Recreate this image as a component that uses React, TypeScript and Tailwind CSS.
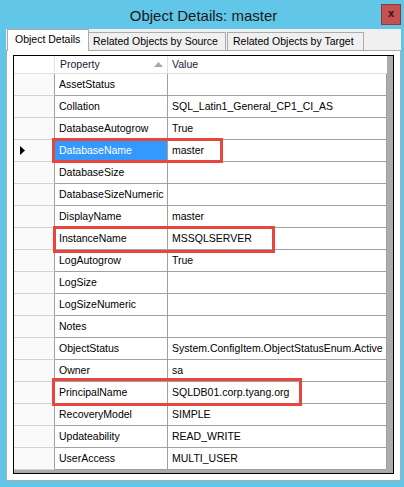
const rows: [string, string][] = [
  ["AssetStatus", ""],
  ["Collation", "SQL_Latin1_General_CP1_CI_AS"],
  ["DatabaseAutogrow", "True"],
  ["DatabaseName", "master"],
  ["DatabaseSize", ""],
  ["DatabaseSizeNumeric", ""],
  ["DisplayName", "master"],
  ["InstanceName", "MSSQLSERVER"],
  ["LogAutogrow", "True"],
  ["LogSize", ""],
  ["LogSizeNumeric", ""],
  ["Notes", ""],
  ["ObjectStatus", "System.ConfigItem.ObjectStatusEnum.Active"],
  ["Owner", "sa"],
  ["PrincipalName", "SQLDB01.corp.tyang.org"],
  ["RecoveryModel", "SIMPLE"],
  ["Updateability", "READ_WRITE"],
  ["UserAccess", "MULTI_USER"],
];

const selected = 3;

function App() {
  return (
    <div
      className="w-[404px] h-[487px] bg-[#62c6e9] flex flex-col pl-[6px] pr-[3px] pb-[6px] text-black"
      style={{ fontFamily: '"Liberation Sans", Arial, sans-serif' }}
    >
      {/* title bar */}
      <div className="h-[29px] flex shrink-0">
        <div className="flex-1" />
        <div className="text-[15px] text-[#1a1a1a] leading-[29px] pt-[1px]">Object Details: master</div>
        <div className="flex-1 flex justify-end items-start">
          <button className="mt-[4px] w-[20px] h-[21px] bg-[#c75050] border border-[#8f3a3a] flex items-center justify-center text-[11px] font-bold text-[#1a1a1a] leading-none pb-[2px]">
            x
          </button>
        </div>
      </div>

      <div className="flex-1 bg-[#f0f0f0] flex flex-col min-h-0">
        {/* tabs */}
        <div className="h-[21px] flex items-end shrink-0 text-[10.5px]">
          <div className="relative z-10 ml-[1px] -mb-px w-[82px] h-[22px] bg-white border border-b-0 border-[#acacac] flex items-center pl-[7px] pb-[1px]">
            Object Details
          </div>
          <div className="w-[137px] h-[18px] bg-[#f0f0f0] border border-b-0 border-l-0 border-[#acacac] flex items-center pl-[4px] whitespace-nowrap overflow-hidden">
            Related Objects by Source
          </div>
          <div className="ml-px w-[137px] h-[18px] bg-[#f0f0f0] border border-b-0 border-[#acacac] flex items-center pl-[5px] whitespace-nowrap overflow-hidden">
            Related Objects by Target
          </div>
        </div>

        {/* panel */}
        <div className="flex-1 bg-white border border-[#acacac] pt-[4px] px-[6px] pb-[6px] min-h-0">
          <div className="relative h-full border border-black bg-[#ababab] text-[10.5px]">
            <div className="w-[373px] bg-white">
              {/* header */}
              <div className="flex h-[18px] border-b border-[#e0e0e0] text-[#1a1a3a]">
                <div className="w-[41px] border-r border-[#e0e0e0]" />
                <div className="w-[113px] border-r border-[#e0e0e0] flex items-center justify-between pl-[5px] pr-[4px]">
                  <span>Property</span>
                  <svg width="9" height="5" viewBox="0 0 9 5">
                    <polygon points="4.5,0 9,5 0,5" fill="#a8a8a8" />
                  </svg>
                </div>
                <div className="w-[219px] flex items-center pl-[4px]">Value</div>
              </div>

              {rows.map(([k, v], i) => (
                <div key={k} className="flex h-[22px]">
                  <div className="w-[41px] border-r border-b border-r-[#a0a0a0] border-b-[#d4d4d4] bg-[#fafafa] flex items-center pl-[6px]">
                    {i === selected && (
                      <svg width="5" height="9" viewBox="0 0 5 9">
                        <polygon points="0,0 5,4.5 0,9" fill="#000" />
                      </svg>
                    )}
                  </div>
                  <div
                    className={
                      i === selected
                        ? "w-[113px] border-r border-b border-[#a0a0a0] bg-[#3399ff] text-white flex items-center pl-[4px] whitespace-nowrap overflow-hidden"
                        : "w-[113px] border-r border-b border-[#a0a0a0] flex items-center pl-[4px] whitespace-nowrap overflow-hidden"
                    }
                  >
                    {k}
                  </div>
                  <div className="w-[219px] border-r border-b border-[#a0a0a0] flex items-center pl-[4px] whitespace-nowrap overflow-hidden">
                    {v}
                  </div>
                </div>
              ))}
            </div>

            {/* highlight boxes */}
            <div className="absolute left-[38px] top-[82px] w-[171px] h-[25px] border-[3px] border-[#e8453c]" />
            <div className="absolute left-[39px] top-[170px] w-[222px] h-[27px] border-[3px] border-[#e8453c]" />
            <div className="absolute left-[38px] top-[322px] w-[250px] h-[28px] border-[3px] border-[#e8453c]" />
          </div>
        </div>
      </div>
    </div>
  );
}

export default App;
